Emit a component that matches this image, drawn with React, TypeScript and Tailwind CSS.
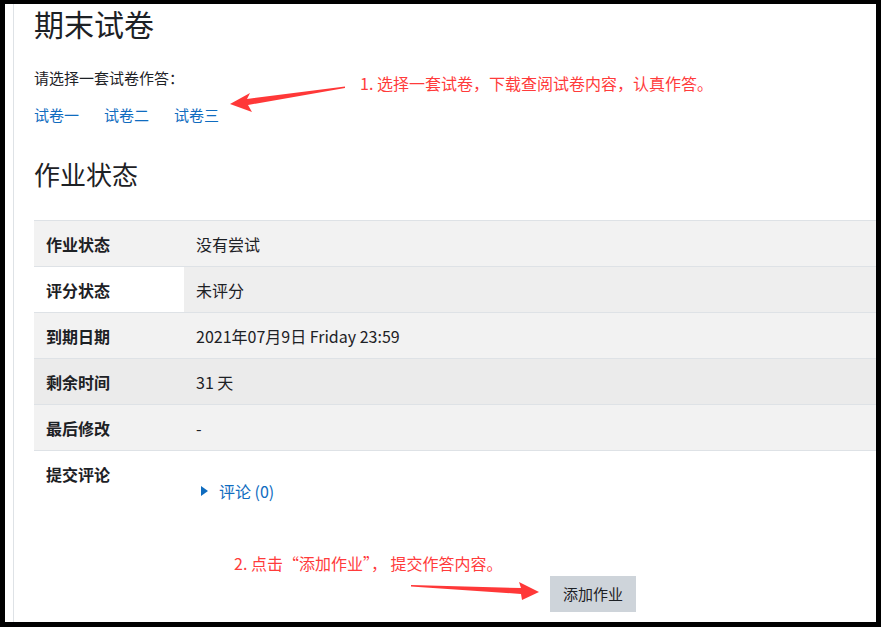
import React from "react";

const rows = [
  { label: "作业状态", value: "没有尝试", labelBg: "bg-[#f2f2f2]", valueBg: "bg-[#f2f2f2]" },
  { label: "评分状态", value: "未评分", labelBg: "bg-white", valueBg: "bg-[#eeeeee]" },
  { label: "到期日期", value: "2021年07月9日 Friday 23:59", labelBg: "bg-[#f2f2f2]", valueBg: "bg-[#f2f2f2]" },
  { label: "剩余时间", value: "31 天", labelBg: "bg-[#ebebeb]", valueBg: "bg-[#ebebeb]" },
  { label: "最后修改", value: "-", labelBg: "bg-[#f2f2f2]", valueBg: "bg-[#f2f2f2]" },
];

const Arrows = () => (
  <svg className="pointer-events-none absolute inset-0" width="881" height="627">
    <polygon
      points="230,104 250,93 247,99 345,86.5 345,88 248,105 252,112"
      fill="#ff3838"
    />
    <polygon
      points="411,585 521,588 519,582 539,592 522,600 521,594 411,586.5"
      fill="#ff3838"
    />
  </svg>
);

const Quote = ({ children }: { children: React.ReactNode }) => (
  <span className="[font-feature-settings:'fwid']">{children}</span>
);

export default function App() {
  return (
    <div
      className="relative flex h-[627px] w-[881px] bg-black pt-[4px] pr-[5px] pb-[5px] pl-[5px] text-[#1d2125]"
      style={{ fontFamily: '"Open Sans", "Noto Sans CJK SC", sans-serif' }}
    >
      <div className="flex flex-1 overflow-hidden bg-white pl-[8px]">
        <div className="w-px shrink-0 bg-[#dee2e6]" />
        <div className="flex w-[1138px] shrink-0 flex-col pl-[20px]">
          <h2 className="mt-[3px] text-[30px] leading-[36px]">期末试卷</h2>
          <p className="mt-[24px] text-[15px] leading-[22px]">请选择一套试卷作答：</p>
          <div className="mt-[15px] flex gap-[25px] text-[15px] leading-[22px] text-[#0f6cbf]">
            <a>试卷一</a>
            <a>试卷二</a>
            <a>试卷三</a>
          </div>
          <h3 className="mt-[33px] text-[26px] leading-[32px]">作业状态</h3>
          <div className="mt-[29px] flex flex-col font-['Noto_Sans_CJK_SC',sans-serif] text-[16px]">
            {rows.map((r) => (
              <div key={r.label} className="flex h-[46px] border-t border-[#dee2e6]">
                <div className={`flex w-[150px] items-center pl-[12px] font-bold ${r.labelBg}`}>
                  {r.label}
                </div>
                <div className={`flex flex-1 items-center pl-[12px] ${r.valueBg}`}>{r.value}</div>
              </div>
            ))}
            <div className="flex border-t border-[#dee2e6]">
              <div className="w-[150px] pt-[12px] pl-[12px] font-bold leading-[22px]">提交评论</div>
              <div className="flex flex-1 items-center gap-[11px] pt-[29px] pl-[17px] text-[#0f6cbf] leading-[22px]">
                <svg width="7" height="10" viewBox="0 0 7 10">
                  <polygon points="0,0 7,5 0,10" fill="#0f6cbf" />
                </svg>
                <span>评论 (0)</span>
              </div>
            </div>
          </div>
          <div className="mt-[74px] flex justify-center">
            <button className="h-[36px] bg-[#ced4da] px-[13px] text-[15px] leading-[24px] text-[#1d2125]">
              添加作业
            </button>
          </div>
        </div>
      </div>
      <span className="absolute left-[360px] top-[72px] font-['Noto_Sans_CJK_SC',sans-serif] text-[16px] leading-[22px] text-[#ff3b3b]">
        1. 选择一套试卷，下载查阅试卷内容，认真作答。
      </span>
      <span className="absolute left-[234px] top-[552px] font-['Noto_Sans_CJK_SC',sans-serif] text-[16px] leading-[22px] text-[#ff3b3b]">
        2. 点击<Quote>“</Quote>添加作业<Quote>”</Quote>， 提交作答内容。
      </span>
      <Arrows />
    </div>
  );
}
